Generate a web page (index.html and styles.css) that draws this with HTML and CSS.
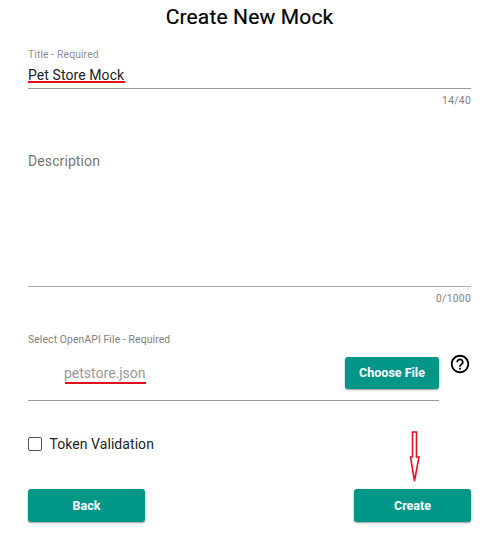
FILE: index.html
```html
<!DOCTYPE html>
<html lang="en">
<head>
<meta charset="utf-8">
<title>Create New Mock</title>
<link rel="stylesheet" href="styles.css">
</head>
<body>
<main class="form">
  <h1 class="heading">Create New Mock</h1>
  <section class="field field-title">
    <div class="label">Title - Required</div>
    <div class="value"><span class="marked">Pet Store Mock</span></div>
  </section>
  <div class="counter">14/40</div>
  <section class="field field-description">
    <div class="placeholder">Description</div>
  </section>
  <div class="counter">0/1000</div>
  <section class="file">
    <div class="label file-label">Select OpenAPI File - Required</div>
    <div class="file-row">
      <div class="file-box">
        <span class="file-name marked">petstore.json</span>
        <button class="button choose">Choose File</button>
      </div>
      <svg class="help" viewBox="0 0 24 24"><path d="M11 18h2v-2h-2v2zm1-16C6.48 2 2 6.48 2 12s4.480 10 10 10 10-4.480 10-10S17.520 2 12 2zm0 18c-4.410 0-8-3.590-8-8s3.590-8 8-8 8 3.590 8 8-3.590 8-8 8zm0-14c-2.210 0-4 1.790-4 4h2c0-1.100.9-2 2-2s2 .9 2 2c0 2-3 1.750-3 5h2c0-2.250 3-2.500 3-5 0-2.210-1.790-4-4-4z"/></svg>
    </div>
  </section>
  <div class="check"><span class="box"></span><span class="check-text">Token Validation</span></div>
  <footer class="actions">
    <button class="button wide">Back</button>
    <div class="create">
      <svg class="arrow" viewBox="0 0 12 54"><path d="M3.500 2h4v25h2.500L5.500 51 1.500 27h2z"/></svg>
      <button class="button wide">Create</button>
    </div>
  </footer>
</main>
</body>
</html>
```
FILE: styles.css
```css
* { box-sizing: border-box; }
body { margin: 0; background: #fff; font-family: Roboto, sans-serif; color: #222; }
.form { width: 500px; height: 535px; padding: 0 29px 0 28px; overflow: hidden; }
.heading { margin: 0; height: 34px; line-height: 34px; font-size: 21px; font-weight: 400; letter-spacing: .15px; text-align: center; color: #000; -webkit-text-stroke: .2px #000; white-space: nowrap; }
.field { border-bottom: 1px solid #999; }
.field-title { height: 55px; padding-top: 13px; }
.label { height: 16px; line-height: 16px; font-size: 10.300px; letter-spacing: .14px; color: #909090; }
.value { height: 24px; line-height: 24px; font-size: 14px; letter-spacing: .08px; }
.marked { position: relative; white-space: nowrap; }
.marked::after { content: ""; position: absolute; left: 0; right: -1px; top: 14px; height: 2px; background: #e01020; }
.counter { height: 22px; line-height: 24px; font-size: 10.300px; letter-spacing: .3px; text-align: right; color: #808080; }
.field-description { height: 176px; padding-top: 40px; border-color: #b0b0b0; }
.placeholder { height: 20px; line-height: 20px; font-size: 14px; letter-spacing: .1px; color: #777; }
.file { padding-top: 22px; }
.file-label { line-height: 17px; color: #808080; }
.file-row { display: flex; height: 54px; }
.file-box { display: flex; align-items: flex-start; justify-content: space-between; width: 411px; padding: 10px 0 0 36px; border-bottom: 1px solid #999; }
.file-name { line-height: 32px; font-size: 14px; letter-spacing: 0; color: #999; }
.file-name::after { top: 25px; left: 1px; right: 0; }
.button { display: block; height: 32px; padding: 0; border: 0; border-radius: 3px; background: #009688; color: #fff; font: 700 12.500px/32px Roboto, sans-serif; text-align: center; box-shadow: 0 1px 2px rgba(0,0,0,.4); }
.choose { width: 94px; }
.help { width: 22px; height: 22px; margin: 6px 0 0 10px; fill: #000; }
.check { display: flex; align-items: center; height: 20px; margin-top: 33px; }
.box { width: 14px; height: 14px; border: 1.500px solid #555; border-radius: 2px; }
.check-text { margin-left: 7.500px; font-size: 14px; letter-spacing: .06px; }
.actions { display: flex; justify-content: space-between; margin-top: 35px; }
.wide { width: 117px; height: 33px; }
.create { position: relative; }
.arrow { position: absolute; left: 55px; top: -59px; width: 12px; height: 54px; fill: #fff; stroke: #dc1420; stroke-width: 1.600; }
```
